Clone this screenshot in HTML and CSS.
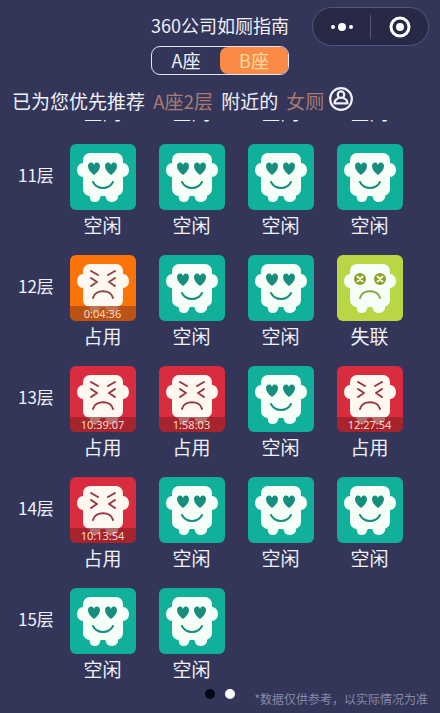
FILE: index.html
```html
<!DOCTYPE html>
<html lang="zh-CN">
<head>
<meta charset="utf-8">
<meta name="viewport" content="width=device-width, initial-scale=1">
<title>360公司如厕指南</title>
<link rel="stylesheet" href="styles.css">
</head>
<body>
<svg class="sprites" aria-hidden="true">
  <defs>
    <g id="body">
      <rect x="13" y="9" width="40" height="43" rx="7"/>
      <ellipse cx="13" cy="26" rx="6" ry="7"/>
      <ellipse cx="53" cy="26" rx="6" ry="7"/>
      <path d="M18 46H48V54Q46 58 42 58Q37 58 36 54Q35.500 51 33 51Q30.500 51 30 54Q29 58 25 58Q20 58 20 54Z"/>
    </g>
    <path id="heart" d="M0 7C-4 4-6 1-6-2C-6-6-1-7 0-3C1-7 6-6 6-2C6 1 4 4 0 7Z"/>
    <symbol id="free" viewBox="0 0 66 66">
      <use href="#body"/>
      <g class="ink-fill"><use href="#heart" x="24" y="24"/><use href="#heart" x="41" y="24"/></g>
      <path class="ink-line" d="M23 38C27 46 39 46 43 38"/>
    </symbol>
    <symbol id="busy" viewBox="0 0 66 66">
      <use href="#body"/>
      <path class="ink-line" d="M21 16L28 20M21 23L27 27L21 31M45 16L38 20M45 23L39 27L45 31M23 43C25 34 41 34 43 43"/>
    </symbol>
    <symbol id="lost" viewBox="0 0 66 66">
      <use href="#body"/>
      <g class="ink-fill"><circle cx="23" cy="24" r="6"/><circle cx="43" cy="24" r="6"/></g>
      <path class="eye-cross" d="M20 21L26 27M26 21L20 27M40 21L46 27M46 21L40 27"/>
      <path class="ink-line" d="M23 43C25 34 41 34 43 43"/>
    </symbol>
  </defs>
</svg>

<div class="app">
  <header class="header">
    <h1 class="title">360公司如厕指南</h1>
    <div class="capsule">
      <button class="capsule-button" type="button" aria-label="更多">
        <svg width="24" height="24" viewBox="0 0 24 24" fill="currentColor"><circle cx="3" cy="12" r="2"/><circle cx="12" cy="12" r="4"/><circle cx="21" cy="12" r="2"/></svg>
      </button>
      <button class="capsule-button" type="button" aria-label="关闭">
        <svg width="24" height="24" viewBox="0 0 24 24"><circle cx="12" cy="12" r="9" fill="none" stroke="currentColor" stroke-width="3"/><circle cx="12" cy="12" r="4" fill="currentColor"/></svg>
      </button>
    </div>
    <div class="tabs">
      <button class="tab" type="button" aria-pressed="false">A座</button>
      <button class="tab active" type="button" aria-pressed="true">B座</button>
    </div>
    <p class="tip">
      <span>已为您优先推荐</span>
      <span class="accent">A座2层</span>
      <span>附近的</span>
      <span class="accent">女厕</span>
      <svg class="person" viewBox="0 0 24 24" aria-hidden="true"><circle cx="12" cy="12" r="10"/><circle cx="12" cy="8" r="3"/><path d="M10 11C7 12 6 13 6 16H18C18 13 17 12 14 11"/></svg>
    </p>
  </header>

  <main class="floors">
    <div class="floor previous">
      <span></span>
      <span class="state">空闲</span><span class="state">空闲</span><span class="state">空闲</span><span class="state">空闲</span>
    </div>
    <section class="floor">
      <h2 class="floor-name">11层</h2>
      <div class="stall"><div class="tile free"><svg class="face"><use href="#free"/></svg></div><span class="state">空闲</span></div>
      <div class="stall"><div class="tile free"><svg class="face"><use href="#free"/></svg></div><span class="state">空闲</span></div>
      <div class="stall"><div class="tile free"><svg class="face"><use href="#free"/></svg></div><span class="state">空闲</span></div>
      <div class="stall"><div class="tile free"><svg class="face"><use href="#free"/></svg></div><span class="state">空闲</span></div>
    </section>
    <section class="floor">
      <h2 class="floor-name">12层</h2>
      <div class="stall"><div class="tile warm"><svg class="face"><use href="#busy"/></svg><time class="timer">0:04:36</time></div><span class="state">占用</span></div>
      <div class="stall"><div class="tile free"><svg class="face"><use href="#free"/></svg></div><span class="state">空闲</span></div>
      <div class="stall"><div class="tile free"><svg class="face"><use href="#free"/></svg></div><span class="state">空闲</span></div>
      <div class="stall"><div class="tile lost"><svg class="face"><use href="#lost"/></svg></div><span class="state">失联</span></div>
    </section>
    <section class="floor">
      <h2 class="floor-name">13层</h2>
      <div class="stall"><div class="tile busy"><svg class="face"><use href="#busy"/></svg><time class="timer">10:39:07</time></div><span class="state">占用</span></div>
      <div class="stall"><div class="tile busy"><svg class="face"><use href="#busy"/></svg><time class="timer">1:58:03</time></div><span class="state">占用</span></div>
      <div class="stall"><div class="tile free"><svg class="face"><use href="#free"/></svg></div><span class="state">空闲</span></div>
      <div class="stall"><div class="tile busy"><svg class="face"><use href="#busy"/></svg><time class="timer">12:27:54</time></div><span class="state">占用</span></div>
    </section>
    <section class="floor">
      <h2 class="floor-name">14层</h2>
      <div class="stall"><div class="tile busy"><svg class="face"><use href="#busy"/></svg><time class="timer">10:13:54</time></div><span class="state">占用</span></div>
      <div class="stall"><div class="tile free"><svg class="face"><use href="#free"/></svg></div><span class="state">空闲</span></div>
      <div class="stall"><div class="tile free"><svg class="face"><use href="#free"/></svg></div><span class="state">空闲</span></div>
      <div class="stall"><div class="tile free"><svg class="face"><use href="#free"/></svg></div><span class="state">空闲</span></div>
    </section>
    <section class="floor">
      <h2 class="floor-name">15层</h2>
      <div class="stall"><div class="tile free"><svg class="face"><use href="#free"/></svg></div><span class="state">空闲</span></div>
      <div class="stall"><div class="tile free"><svg class="face"><use href="#free"/></svg></div><span class="state">空闲</span></div>
    </section>
  </main>

  <footer class="footer">
    <div class="pager"><span class="dot"></span><span class="dot current"></span></div>
    <small class="note">*数据仅供参考，以实际情况为准</small>
  </footer>
</div>
</body>
</html>
```
FILE: styles.css
```css
* {
  box-sizing: border-box;
}

body {
  margin: 0;
  background: #333658;
  color: #f0f1fa;
  font-family: "Noto Sans CJK SC", sans-serif;
}

button {
  padding: 0;
  border: 0;
  background: none;
  color: inherit;
  font: inherit;
}

.sprites {
  position: absolute;
  width: 0;
  height: 0;
}

.app {
  display: flex;
  flex-direction: column;
  min-height: 100vh;
}

.header {
  position: relative;
  padding-top: 12px;
}

.title {
  margin: 0;
  font-size: 18px;
  font-weight: 400;
  line-height: 26px;
  text-align: center;
}

.capsule {
  position: absolute;
  top: 7px;
  right: 11px;
  display: flex;
  align-items: center;
  width: 117px;
  height: 39px;
  border: 1px solid #55577a;
  border-radius: 20px;
  background: #282947;
  color: #fff;
}

.capsule-button {
  display: flex;
  flex: 1;
  align-items: center;
  justify-content: center;
  height: 24px;
}

.capsule-button + .capsule-button {
  border-left: 1px solid #55577a;
}

.tabs {
  display: flex;
  width: 138px;
  height: 29px;
  margin: 8px auto 0;
  border: 1px solid #e4e5f2;
  border-radius: 9px;
}

.tab {
  flex: 1;
  border-radius: 8px;
  font-size: 18px;
  line-height: 27px;
}

.tab.active {
  background: #fa8a45;
  color: #ffdf9f;
}

.tip {
  display: flex;
  align-items: center;
  gap: 8px;
  margin: 12px 0 0;
  padding-left: 12px;
  font-size: 19px;
  line-height: 28px;
  white-space: nowrap;
}

.accent {
  color: #aa7a73;
}

.person {
  width: 26px;
  height: 26px;
  margin-top: -4px;
  margin-left: -4px;
  fill: none;
  stroke: currentColor;
  stroke-width: 2;
  stroke-linejoin: round;
}

.floors {
  flex: 1;
  overflow: hidden;
  margin-top: 5px;
}

.floor {
  display: grid;
  grid-template-columns: 58px repeat(4, 1fr);
  height: 111px;
  padding-right: 26px;
}

.floor:last-child {
  height: 95px;
}

.previous {
  height: 28px;
  margin-top: -22px;
  margin-bottom: 18px;
}

.floor-name {
  margin: 0;
  padding-left: 18px;
  font-size: 17px;
  font-weight: 400;
  line-height: 62px;
  white-space: nowrap;
}

.stall {
  display: flex;
  flex-direction: column;
  align-items: center;
  gap: 1px;
}

.tile {
  position: relative;
  overflow: hidden;
  width: 66px;
  height: 66px;
  border-radius: 6px;
}

.free {
  background: #10b09a;
  color: #168d7d;
}

.warm {
  background: #fb7309;
  color: #874840;
}

.busy {
  background: #d92c3f;
  color: #933646;
}

.lost {
  background: #b9d745;
  color: #8b9e31;
}

.face {
  display: block;
  width: 66px;
  height: 66px;
  fill: #f5fff8;
}

.warm .face,
.busy .face {
  fill: #fff8f1;
}

.ink-fill {
  fill: currentColor;
}

.ink-line {
  fill: none;
  stroke: currentColor;
  stroke-width: 2;
  stroke-linecap: round;
  stroke-linejoin: round;
}

.eye-cross {
  stroke: #f2f7c4;
  stroke-width: 2;
}

.timer {
  position: absolute;
  right: 0;
  bottom: 0;
  left: 0;
  background: rgb(140 32 38 / 65%);
  color: #ffd9ca;
  font-family: "Noto Sans", sans-serif;
  font-size: 11px;
  line-height: 15px;
  text-align: center;
}

.warm .timer {
  background: rgb(165 72 24 / 75%);
}

.state {
  font-size: 19px;
  line-height: 28px;
  text-align: center;
}

.footer {
  display: grid;
  grid-template-columns: 1fr auto 1fr;
  align-items: start;
  height: 30px;
  padding-top: 6px;
}

.pager {
  display: flex;
  grid-column: 2;
  gap: 10px;
}

.dot {
  width: 10px;
  height: 10px;
  border-radius: 50%;
  background: #050716;
}

.dot.current {
  background: #fff;
}

.note {
  padding-right: 12px;
  color: #868aa8;
  font-size: 12px;
  line-height: 20px;
  text-align: right;
  white-space: nowrap;
}
```
